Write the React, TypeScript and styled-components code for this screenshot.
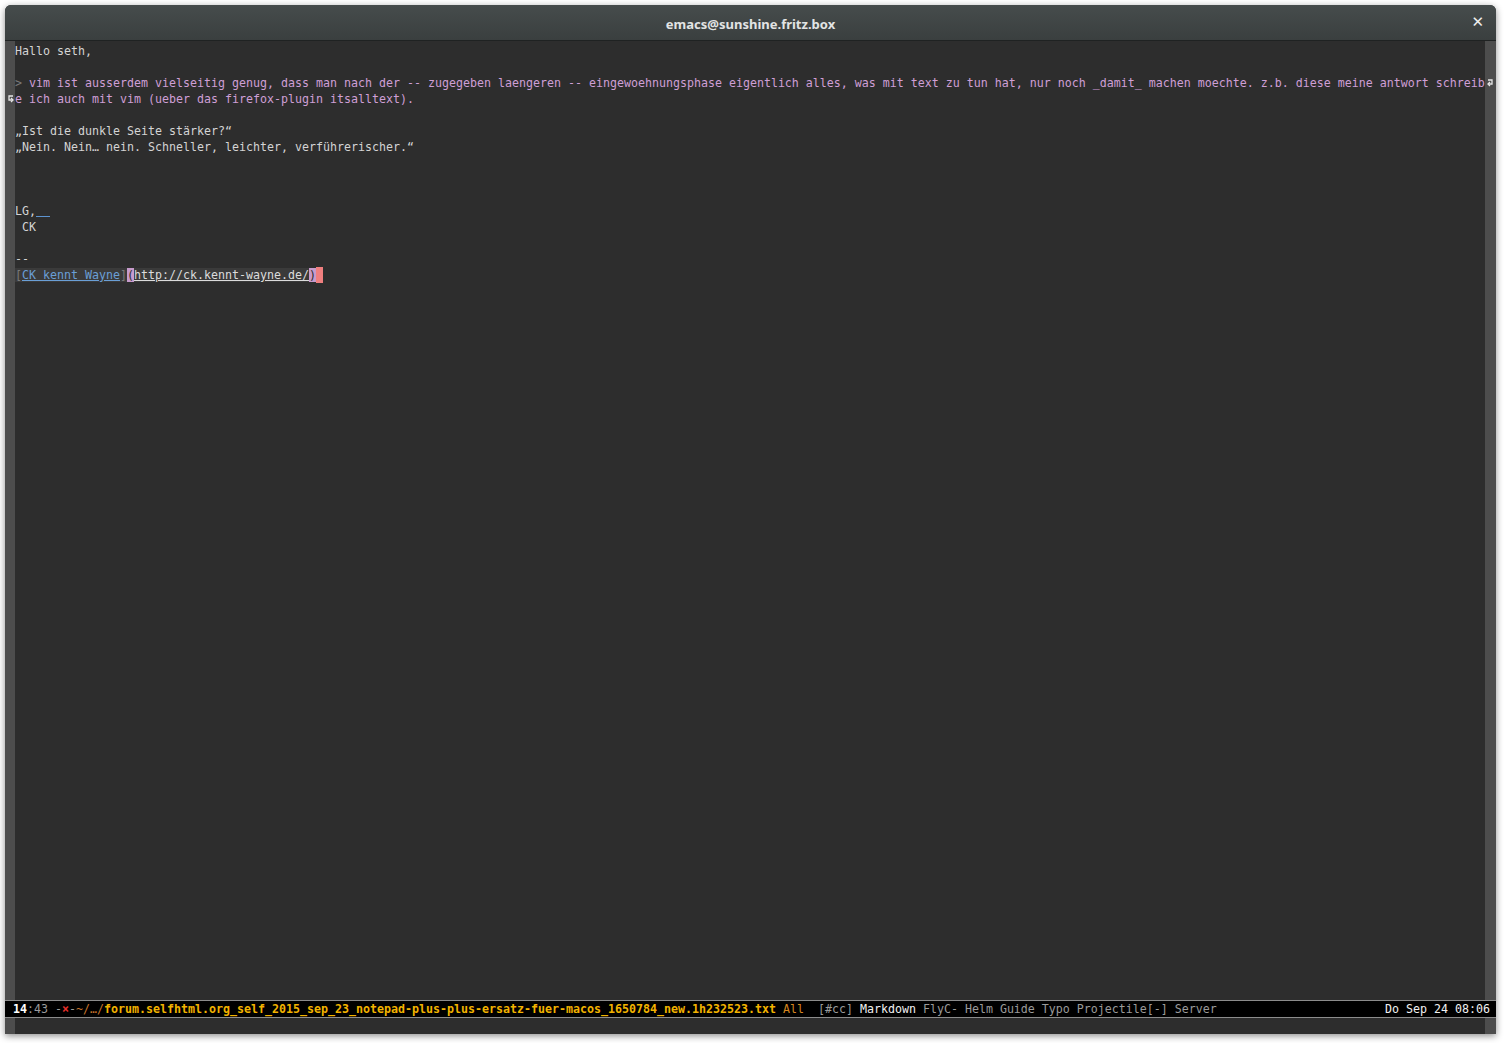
import styled, { createGlobalStyle } from "styled-components";

const Global = createGlobalStyle`
  html, body {
    margin: 0;
    padding: 0;
    background: #ffffff;
  }
`;

const Page = styled.div`
  padding: 5px 9px 9px 5px;
  width: 1505px;
  height: 1043px;
  box-sizing: border-box;
`;

const Window = styled.div`
  width: 1491px;
  height: 1029px;
  display: flex;
  flex-direction: column;
  border-radius: 6px 6px 0 0;
  overflow: hidden;
  background: #2d2d2d;
  box-shadow: 0 2px 7px rgba(0, 0, 0, 0.45);
`;

const TitleBar = styled.div`
  height: 35px;
  flex: none;
  display: flex;
  align-items: center;
  justify-content: center;
  position: relative;
  background: linear-gradient(#464c4c, #3a3f3f);
  border-bottom: 1px solid #1f2222;
`;

const Title = styled.span`
  font-family: "Noto Sans", "Open Sans", sans-serif;
  font-weight: 700;
  font-size: 13px;
  color: #e2e4e4;
  margin-top: 2px;
`;

const CloseBtn = styled.span`
  position: absolute;
  right: 12px;
  top: 8px;
  font-family: "DejaVu Sans", sans-serif;
  font-weight: 700;
  font-size: 15px;
  color: #eeeeee;
`;

const Editor = styled.div`
  flex: 1;
  display: grid;
  grid-template-columns: 10px 1fr 11px;
  min-height: 0;
`;

// fringe columns left and right of the text
const Fringe = styled.div<{ $pad?: boolean }>`
  background: #4d4d4d;
  display: flex;
  flex-direction: column;
  padding-top: ${(p) => (p.$pad ? "2px" : "0")};
`;

const FringeCell = styled.div`
  height: 16px;
  display: flex;
  align-items: center;
  justify-content: center;
`;

const TextArea = styled.div`
  display: flex;
  flex-direction: column;
  overflow: hidden;
  padding-top: 2px;
  font-family: "DejaVu Sans Mono", "Liberation Mono", monospace;
  font-size: 11.63px;
  color: #d4d4d4;
`;

const Line = styled.div`
  height: 16px;
  line-height: 16px;
  white-space: pre;
`;

const Quote = styled.span`
  color: #cf9fd6;
`;

const Marker = styled.span`
  color: #7a7a7a;
`;

const HardBreak = styled.span`
  color: #5d93cf;
  text-decoration: underline;
`;

const LinkBox = styled.span`
  background: #3a3a3a;
`;

const LinkText = styled.span`
  color: #6a9fd6;
  text-decoration: underline;
`;

const Url = styled.span`
  color: #dcdcdc;
  text-decoration: underline;
`;

const Paren = styled.span`
  background: #c79bcc;
  color: #2d2d2d;
`;

const Cursor = styled.span`
  display: inline-block;
  width: 7px;
  height: 16px;
  vertical-align: top;
  background: #f07f7f;
`;

const ModeLine = styled.div`
  height: 16px;
  flex: none;
  display: flex;
  align-items: center;
  justify-content: space-between;
  padding: 0 6px 0 8px;
  background: #000000;
  border-top: 1px solid #8c8c8c;
  border-bottom: 1px solid #8c8c8c;
  font-family: "DejaVu Sans Mono", "Liberation Mono", monospace;
  font-size: 11.63px;
  color: #9a9a9a;
  white-space: pre;
`;

const Seg = styled.span<{ $c?: string; $b?: boolean }>`
  color: ${(p) => p.$c ?? "#9a9a9a"};
  font-weight: ${(p) => (p.$b ? 700 : 400)};
`;

const Minibuffer = styled.div`
  height: 16px;
  flex: none;
  display: grid;
  grid-template-columns: 10px 1fr 11px;
`;

const Arrow = ({ flip }: { flip?: boolean }) => (
  <svg width="7" height="8" viewBox="0 0 7 8" style={flip ? { transform: "scaleX(-1)" } : undefined}>
    <path d="M1 1 H5 V5 H2" fill="none" stroke="#e6e6e6" strokeWidth="1.3" />
    <path d="M3 3 L1 5 L3 7" fill="none" stroke="#e6e6e6" strokeWidth="1.3" />
  </svg>
);

const LINES = 60;

export default function App() {
  const rows = Array.from({ length: LINES });
  return (
    <>
      <Global />
      <Page>
        <Window>
          <TitleBar>
            <Title>emacs@sunshine.fritz.box</Title>
            <CloseBtn>✕</CloseBtn>
          </TitleBar>
          <Editor>
            <Fringe $pad>
              {rows.map((_, i) => (
                <FringeCell key={i}>{i === 3 ? <Arrow flip /> : null}</FringeCell>
              ))}
            </Fringe>
            <TextArea>
              <Line>Hallo seth,</Line>
              <Line> </Line>
              <Line>
                <Marker>&gt; </Marker>
                <Quote>
                  vim ist ausserdem vielseitig genug, dass man nach der -- zugegeben laengeren -- eingewoehnungsphase eigentlich alles, was mit text zu tun hat, nur noch _damit_ machen moechte. z.b. diese meine antwort schreib
                </Quote>
              </Line>
              <Line>
                <Quote>e ich auch mit vim (ueber das firefox-plugin itsalltext).</Quote>
              </Line>
              <Line> </Line>
              <Line>„Ist die dunkle Seite stärker?“</Line>
              <Line>„Nein. Nein… nein. Schneller, leichter, verführerischer.“</Line>
              <Line> </Line>
              <Line> </Line>
              <Line> </Line>
              <Line>
                LG,<HardBreak>  </HardBreak>
              </Line>
              <Line> CK</Line>
              <Line> </Line>
              <Line>--</Line>
              <Line>
                <LinkBox>
                  <Marker>[</Marker>
                  <LinkText>CK kennt Wayne</LinkText>
                  <Marker>]</Marker>
                  <Paren>(</Paren>
                  <Url>http://ck.kennt-wayne.de/</Url>
                  <Paren>)</Paren>
                </LinkBox>
                <Cursor />
              </Line>
            </TextArea>
            <Fringe $pad>
              {rows.map((_, i) => (
                <FringeCell key={i}>{i === 2 ? <Arrow /> : null}</FringeCell>
              ))}
            </Fringe>
          </Editor>
          <ModeLine>
            <span>
              <Seg $c="#ffffff" $b>14</Seg>
              <Seg>:43 -</Seg>
              <Seg $c="#e8302a" $b>×</Seg>
              <Seg>-</Seg>
              <Seg $c="#c8742a">~/…/</Seg>
              <Seg $c="#f2b300" $b>
                forum.selfhtml.org_self_2015_sep_23_notepad-plus-plus-ersatz-fuer-macos_1650784_new.1h232523.txt
              </Seg>
              <Seg $c="#d7871f"> All</Seg>
              <Seg>  [#cc] </Seg>
              <Seg $c="#f0f0f0">Markdown</Seg>
              <Seg> FlyC- Helm Guide Typo Projectile[-] Server</Seg>
            </span>
            <Seg $c="#f0f0f0">Do Sep 24 08:06</Seg>
          </ModeLine>
          <Minibuffer>
            <Fringe />
            <div />
            <Fringe />
          </Minibuffer>
        </Window>
      </Page>
    </>
  );
}
